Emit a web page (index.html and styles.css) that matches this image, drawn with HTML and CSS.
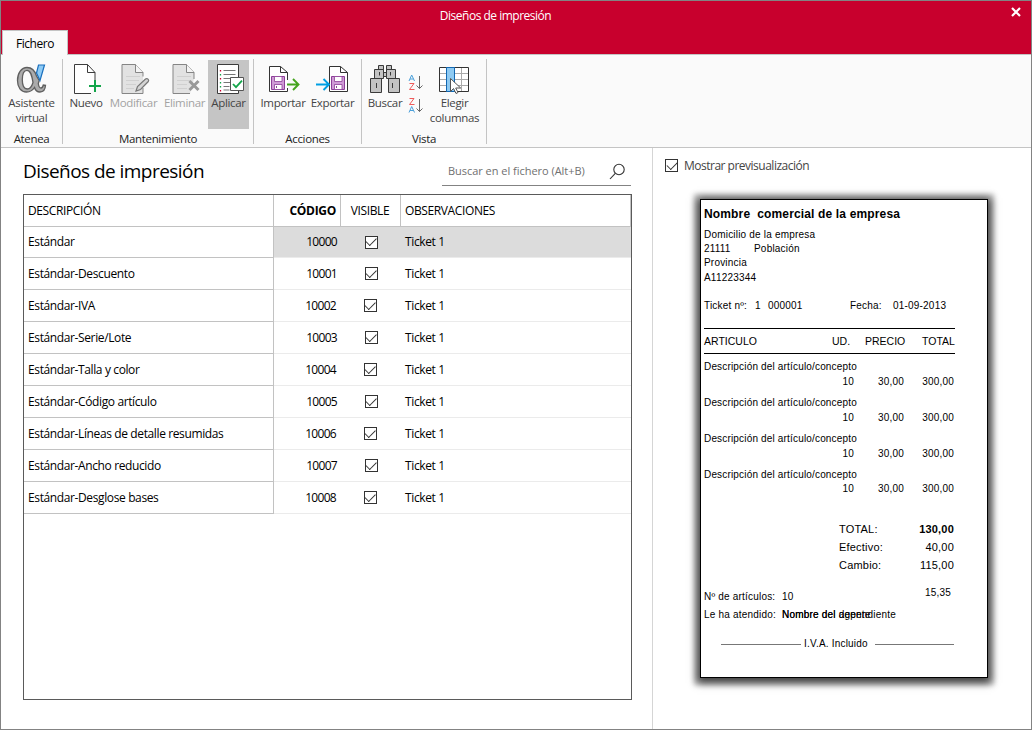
FILE: index.html
```html
<!DOCTYPE html>
<html lang="es">
<head>
<meta charset="utf-8">
<title>Diseños de impresión</title>
<link rel="stylesheet" href="styles.css">
</head>
<body>
<div class="window">
  <header class="titlebar">
    <div class="caption">Diseños de impresión</div>
    <svg class="close" width="10" height="10" viewBox="0 0 10 10"><path d="M1 1 9 9M9 1 1 9" stroke="#fff" stroke-width="2.2"/></svg>
    <div class="tab">Fichero</div>
  </header>

  <nav class="ribbon">
    <section class="group g-atenea">
      <div class="tools">
        <div class="tool">
          <svg width="34" height="34" viewBox="0 0 34 34"><path fill-rule="evenodd" d="M12 5.500C17.500 5.500 20 9 21.500 14L24.200 18.500 23.300 21.500C23.700 24.500 24.500 26 26 26 27.600 26 28 24.500 28.300 23L30.500 23.300C30.300 27 28.300 30 25 30 22 30 20.300 28.200 19.500 25.500 17.500 28.500 15 30 11.500 30 6 30 2.500 25.500 2.500 18.500 2.500 11 6.500 5.500 12 5.500ZM12 8.300C8.500 8.300 7.300 13 7.300 17.800 7.300 23 9 27 12.300 27 15 27 16.800 24.500 18 20.500 16.800 13 15.500 8.300 12 8.300Z" fill="#ababab" stroke="#5f5f5f" stroke-width="1.300"/><path d="M23.500 3h6L25 18.500 21.500 11z" fill="#8ecbf5" stroke="#1a6fbd" stroke-width="1.200"/></svg>
          <span>Asistente<br>virtual</span>
        </div>
      </div>
      <div class="group-name">Atenea</div>
    </section>

    <section class="group g-mant">
      <div class="tools">
        <div class="tool w46">
          <svg width="34" height="34" viewBox="0 0 34 34"><path d="M26 21V10.500L18.500 2.500H5.500V31.500H22" fill="#fff" stroke="#3c3c3c"/><path d="M18.500 2.500V10.500H26" fill="none" stroke="#3c3c3c"/><path d="M26 18v12M20 24h12" stroke="#13a54a" stroke-width="2"/></svg>
          <span>Nuevo</span>
        </div>
        <div class="tool w49 off">
          <svg width="34" height="34" viewBox="0 0 34 34"><path d="M26 14.500V10.500L18.500 2.500H5V31.500H26V26" fill="#e2e2e2" stroke="#858585"/><path d="M18.500 2.500V10.500H26" fill="#f4f4f4" stroke="#858585"/><path d="M9 14.500h14M9 18.500h13M9 22.500h10M9 26.500h8" stroke="#d0d0d0"/><path d="M19 29l1.500-4.500L28.500 17c1.800-1.300 4 .8 2.800 2.500L23.500 27.500z" fill="#d4d4d4" stroke="#777" stroke-width="1.200"/></svg>
          <span>Modificar</span>
        </div>
        <div class="tool w50 shift">
          <svg width="34" height="34" viewBox="0 0 34 34"><path d="M26 17V10.500L18.500 2.500H5V31.500H22" fill="#e2e2e2" stroke="#858585"/><path d="M18.500 2.500V10.500H26" fill="#f4f4f4" stroke="#858585"/><path d="M9 14.500h14M9 18.500h13M9 22.500h10M9 26.500h10" stroke="#d0d0d0"/><path d="M21.500 19l9 9M30.500 19l-9 9" stroke="#999" stroke-width="3"/></svg>
          <span class="off">Eliminar</span>
        </div>
        <div class="tool w41 on">
          <svg width="34" height="34" viewBox="0 0 34 34"><path d="M5.500 2.500h21v29h-21z" fill="#fff" stroke="#3c3c3c"/><path d="M11.500 8.500h12M11.500 12.500h12M11.500 16.500h12M11.500 20.500h7M11.500 24.500h6M11.500 28h6" stroke="#777"/><path d="M8.500 8v1.500M8.500 16v1.500M8.500 28v1.500" stroke="#c8002d" stroke-width="1.300"/><path d="M8.500 12v1.500M8.500 20v1.500M8.500 24v1.500" stroke="#13a54a" stroke-width="1.300"/><path d="M18.500 15.500h13v13h-13z" fill="#fff" stroke="#555"/><path d="M21 22l3 3.200 6-6.500" fill="none" stroke="#13a54a" stroke-width="1.800"/></svg>
          <span>Aplicar</span>
        </div>
      </div>
      <div class="group-name">Mantenimiento</div>
    </section>

    <section class="group g-acc">
      <div class="tools">
        <div class="tool w50">
          <svg width="34" height="34" viewBox="0 0 34 34"><path d="M21.500 18V10.500L14.500 4.500H3.500V29.500H21.500V26" fill="#fff" stroke="#333"/><path d="M14.500 4.500V10.500H21.500" fill="none" stroke="#333"/><path d="M5.500 14.500h13v13h-13z" fill="#cf9bd6" stroke="#8d3f98"/><path d="M8.500 14.500h7.500v5h-7.500zM8.500 27.500v-5h7.500v5z" fill="#fff" stroke="#8d3f98" stroke-width=".8"/><path d="M10.500 24v2" stroke="#8d3f98"/><path d="M21 22.500h11M27 17l5.500 5.500L27 28" fill="none" stroke="#45a41e" stroke-width="1.900"/></svg>
          <span>Importar</span>
        </div>
        <div class="tool w49">
          <svg width="34" height="34" viewBox="0 0 34 34"><path d="M13.500 29.500V4.500H24.500L31.500 10.500V29.500z" fill="#fff" stroke="#333"/><path d="M24.500 4.500V10.500H31.500" fill="none" stroke="#333"/><path d="M15.500 14.500h13v13h-13z" fill="#cf9bd6" stroke="#8d3f98"/><path d="M18.500 14.500h7.500v5h-7.500zM18.500 27.500v-5h7.500v5z" fill="#fff" stroke="#8d3f98" stroke-width=".8"/><path d="M20.500 24v2" stroke="#8d3f98"/><path d="M0 22.500h12.500M7.500 17l5.500 5.500L7.500 28" fill="none" stroke="#009fe3" stroke-width="1.900"/></svg>
          <span>Exportar</span>
        </div>
      </div>
      <div class="group-name">Acciones</div>
    </section>

    <section class="group g-vista">
      <div class="tools">
        <div class="tool w40">
          <svg width="34" height="34" viewBox="0 0 34 34"><g fill="#c3c3c3" stroke="#3a3a3a"><path d="M10.500 3.500h5v4h-5zM18.500 3.500h5v4h-5zM6.500 7.500h9v9h-9zM18.500 7.500h9v9h-9zM2.500 16.500h11v14h-11zM20.500 16.500h11v14h-11zM15.500 10.500h3v4h-3z"/><path d="M11.500 10v3.500M22.500 10v3.500M8.500 21v5M24.500 21v5" fill="none"/></g></svg>
          <span>Buscar</span>
        </div>
        <div class="sorts">
          <svg width="16" height="17" viewBox="0 0 16 17"><path d="M1 7 3.700 1 6.500 7M2 5h3.500" fill="none" stroke="#4ba0da"/><path d="M1.500 9.500h4.500L1.500 15.500h5" fill="none" stroke="#ee5a5a"/><path d="M11.500 2v12.500M8.500 11.500l3 3 3-3" fill="none" stroke="#666"/></svg>
          <svg width="16" height="17" viewBox="0 0 16 17"><path d="M1.500 1.500h4.500L1.500 7.500h5" fill="none" stroke="#ee5a5a"/><path d="M1 15.500 3.700 9.500 6.500 15.500M2 13.500h3.500" fill="none" stroke="#4ba0da"/><path d="M11.500 2v12.500M8.500 11.500l3 3 3-3" fill="none" stroke="#666"/></svg>
        </div>
        <div class="tool w55">
          <svg width="34" height="34" viewBox="0 0 34 34"><path d="M1.500 5.500h29v24h-29z" fill="#fff"/><path d="M1 11.500h30M1 17.500h30M1 23.500h30M23.500 5v24" stroke="#aaa"/><path d="M1.500 5.500h29v24h-29z" fill="none" stroke="#333"/><path d="M8.500 5.500h8v24h-8z" fill="#8ecaf2" stroke="#1268b3"/><path d="M12.500 16.500v13l3-3 2.500 5 2-1-2.300-4.500h5z" fill="#fff" stroke="#555"/></svg>
          <span>Elegir<br>columnas</span>
        </div>
      </div>
      <div class="group-name">Vista</div>
    </section>
  </nav>

  <main class="content">
    <section class="list">
      <div class="list-head">
        <h1>Diseños de impresión</h1>
        <div class="search"><span>Buscar en el fichero (Alt+B)</span>
          <svg width="17" height="17" viewBox="0 0 17 17"><circle cx="10" cy="6.500" r="5.200" fill="none" stroke="#333" stroke-width="1.100"/><path d="M6.300 10.300 1 16" stroke="#333" stroke-width="1.100"/></svg>
        </div>
      </div>
      <div class="grid">
        <div class="row head"><div class="desc">DESCRIPCIÓN</div><div class="code">CÓDIGO</div><div class="vis">VISIBLE</div><div class="obs">OBSERVACIONES</div></div>
        <div class="row sel"><div class="desc">Estándar</div><div class="code">10000</div><div class="vis"><i class="check"></i></div><div class="obs">Ticket 1</div></div>
        <div class="row"><div class="desc">Estándar-Descuento</div><div class="code">10001</div><div class="vis"><i class="check"></i></div><div class="obs">Ticket 1</div></div>
        <div class="row even"><div class="desc">Estándar-IVA</div><div class="code">10002</div><div class="vis"><i class="check"></i></div><div class="obs">Ticket 1</div></div>
        <div class="row"><div class="desc">Estándar-Serie/Lote</div><div class="code">10003</div><div class="vis"><i class="check"></i></div><div class="obs">Ticket 1</div></div>
        <div class="row even"><div class="desc">Estándar-Talla y color</div><div class="code">10004</div><div class="vis"><i class="check"></i></div><div class="obs">Ticket 1</div></div>
        <div class="row"><div class="desc">Estándar-Código artículo</div><div class="code">10005</div><div class="vis"><i class="check"></i></div><div class="obs">Ticket 1</div></div>
        <div class="row even"><div class="desc">Estándar-Líneas de detalle resumidas</div><div class="code">10006</div><div class="vis"><i class="check"></i></div><div class="obs">Ticket 1</div></div>
        <div class="row"><div class="desc">Estándar-Ancho reducido</div><div class="code">10007</div><div class="vis"><i class="check"></i></div><div class="obs">Ticket 1</div></div>
        <div class="row even"><div class="desc">Estándar-Desglose bases</div><div class="code">10008</div><div class="vis"><i class="check"></i></div><div class="obs">Ticket 1</div></div>
      </div>
    </section>

    <aside class="preview">
      <div class="toggle"><i class="check"></i><span>Mostrar previsualización</span></div>
      <div class="receipt">
        <div class="company">Nombre&nbsp; comercial de la empresa</div>
        <div class="address">Domicilio de la empresa</div>
        <div class="town"><span>21111</span><span>Población</span></div>
        <div>Provincia</div>
        <div>A11223344</div>
        <div class="ticket"><span>Ticket nº:</span><span>1</span><span>000001</span><span>Fecha:</span><span>01-09-2013</span></div>
        <div class="rule"></div>
        <div class="heads"><span>ARTICULO</span><span>UD.</span><span>PRECIO</span><span>TOTAL</span></div>
        <div class="rule"></div>
        <div class="item">Descripción del artículo/concepto</div>
        <div class="nums"><span>10</span><span>30,00</span><span>300,00</span></div>
        <div class="item">Descripción del artículo/concepto</div>
        <div class="nums"><span>10</span><span>30,00</span><span>300,00</span></div>
        <div class="item">Descripción del artículo/concepto</div>
        <div class="nums"><span>10</span><span>30,00</span><span>300,00</span></div>
        <div class="item">Descripción del artículo/concepto</div>
        <div class="nums"><span>10</span><span>30,00</span><span>300,00</span></div>
        <div class="sum"><span>TOTAL:</span><b>130,00</b></div>
        <div class="sum"><span>Efectivo:</span><span>40,00</span></div>
        <div class="sum"><span>Cambio:</span><span>115,00</span></div>
        <div class="extra">15,35</div>
        <div class="foot"><span>Nº de artículos:</span><span>10</span></div>
        <div class="foot agent"><span>Le ha atendido:</span><span>Nombre del agente</span><span>Nombre del dependiente</span></div>
        <div class="vat"><span>I.V.A. Incluido</span></div>
      </div>
    </aside>
  </main>
</div>
</body>
</html>
```
FILE: styles.css
```css
* { box-sizing: border-box; }
body { margin: 0; font: 12px/15px "Open Sans", "Noto Sans", sans-serif; color: #000; background: #fff; }
svg { display: block; flex: none; }
.window { width: 1032px; height: 730px; border: 1px solid #838383; display: flex; flex-direction: column; overflow: hidden; }

.titlebar { height: 54px; flex: none; background: #c8002d; border-bottom: 1px solid #c4c4c4; display: grid; grid-template: 29px 24px / 66px 1fr 22px; }
.caption { grid-column: 1 / 3; color: #fff; text-align: center; padding-top: 7px; margin-left: -19px; letter-spacing: -.5px; }
.close { margin: 6px 0 0 2px; }
.tab { width: 66px; height: 25px; margin-left: 1px; background: #fafafa; border: 1px solid #c4c4c4; border-bottom: 0; text-align: center; line-height: 25px; grid-row: 2; letter-spacing: -.45px; }

.ribbon { height: 93px; flex: none; display: flex; background: #fafafa; border-bottom: 1px solid #c4c4c4; padding-top: 4px; color: #444; font-size: 11.5px; letter-spacing: -.33px; }
.group { height: 85px; border-right: 1px solid #c4c4c4; display: flex; flex-direction: column; }
.tools { display: flex; flex: none; height: 72px; padding-top: 1px; }
.tool { display: flex; flex-direction: column; align-items: center; text-align: center; height: 69px; padding-top: 2px; white-space: nowrap; }
.tool span { margin-top: -1px; }
.group-name { text-align: center; color: #222; line-height: 16px; }
.g-atenea { width: 62px; }
.g-atenea .tool { width: 61px; }
.g-mant { width: 191px; }
.g-acc { width: 108px; }
.g-acc .tools { padding-left: 4px; }
.g-vista { width: 125px; }
.g-vista .tools { padding-left: 3px; }
.w40 { width: 40px; } .w41 { width: 41px; } .w46 { width: 46px; } .w49 { width: 49px; } .w50 { width: 50px; } .w55 { width: 55px; }
.shift { padding-left: 3px; }
.off { color: #a3a3a3; }
.on { background: #c5c5c5; }
.sorts { width: 22px; padding: 14px 0 0 3px; display: flex; flex-direction: column; gap: 6px; }

.content { flex: 1; display: flex; }
.list { width: 652px; border-right: 1px solid #d5d5d5; padding: 10px 20px 0 22px; }
.list-head { display: flex; justify-content: space-between; height: 36px; width: 608px; }
h1 { margin: 0; font-size: 19px; font-weight: 400; line-height: 26px; letter-spacing: -.55px; }
.search { width: 189px; height: 28px; border-bottom: 1px solid #838383; display: flex; justify-content: space-between; padding: 5px 5px 0 6px; color: #707070; font-size: 11px; letter-spacing: -.03px; }
.grid { width: 609px; height: 506px; border: 1px solid #5a5a5a; }
.row { height: 32px; display: grid; grid-template-columns: 250px 67px 60px 230px; line-height: 31px; letter-spacing: -.38px; }
.row > div { border-bottom: 1px solid #ebebeb; }
.row .desc { padding-left: 4px; border-right: 1px solid #c2c2c2; border-bottom-color: #c2c2c2; }
.row.head > div { border-right: 1px solid #c2c2c2; border-bottom-color: #c2c2c2; }
.code { text-align: right; padding-right: 4px; letter-spacing: -.7px; }
.even .code { padding-right: 5px; }
.head .code { font-weight: 700; padding-right: 4px; letter-spacing: -.3px; }
.vis { display: flex; align-items: center; justify-content: center; }
.even .vis { padding-right: 2px; }
.head .vis { padding-right: 1px; }
.obs { padding-left: 4px; }
.row.sel { height: 31px; line-height: 30px; }
.sel > div + div { background: #dcdcdc; }
.check { width: 13px; height: 13px; border: 1px solid #333; background: #fff; display: flex; align-items: center; justify-content: center; flex: none; }
.check::before { content: ""; width: 9px; height: 4.500px; border: solid #333; border-width: 0 0 1.300px 1.300px; transform: translateY(-1.500px) rotate(-45deg); }

.preview { padding: 10px 0 0 12px; }
.toggle { display: flex; align-items: center; gap: 6px; height: 15px; color: #444; letter-spacing: -.5px; }
.receipt { margin: 26px 0 0 35px; width: 288px; height: 479px; border: 1px solid #000; background: #fff; box-shadow: 0 1px 5px 6px rgba(0,0,0,.22), 0 2px 8px 3px rgba(0,0,0,.7); padding: 7px 0 0 3px; display: grid; font: 10px/14px "Liberation Sans", Arial, sans-serif; letter-spacing: .2px; white-space: nowrap;
  grid-template-rows: 21px 14px 14px 15px 28px 29px 6px 19px 7px 15px 21px 15px 21px 15px 21px 14px 40px 18px 18px 28px 4px 18px 29px 14px; }
.company { font-size: 12px; font-weight: 700; letter-spacing: .15px; }
.town { display: grid; grid-template-columns: 50px 1fr; }
.ticket { display: grid; grid-template-columns: 51px 13px 82px 43px 1fr; }
.rule { border-top: 1px solid #000; width: 251px; }
.heads { display: grid; grid-template-columns: 128px 33px 57px 1fr; font-size: 10.5px; letter-spacing: 0; }
.item { letter-spacing: .17px; }
.nums { display: grid; grid-template-columns: 150px 50px 50px; text-align: right; }
.sum { display: grid; padding-left: 135px; width: 250px; grid-template-columns: 60px 1fr; font-size: 11px; }
.sum > :last-child { text-align: right; }
.extra { width: 247px; text-align: right; }
.foot { display: grid; grid-template-columns: 78px 1fr; }
.agent span:nth-child(n+2) { grid-area: 1 / 2; }
.vat { display: grid; grid-template-columns: 80px 64px 79px; column-gap: 3px; align-items: center; padding-left: 17px; }
.vat::before, .vat::after { content: ""; height: 1px; background: #777; }
.vat::after { margin-left: 4px; margin-right: -4px; }
```
